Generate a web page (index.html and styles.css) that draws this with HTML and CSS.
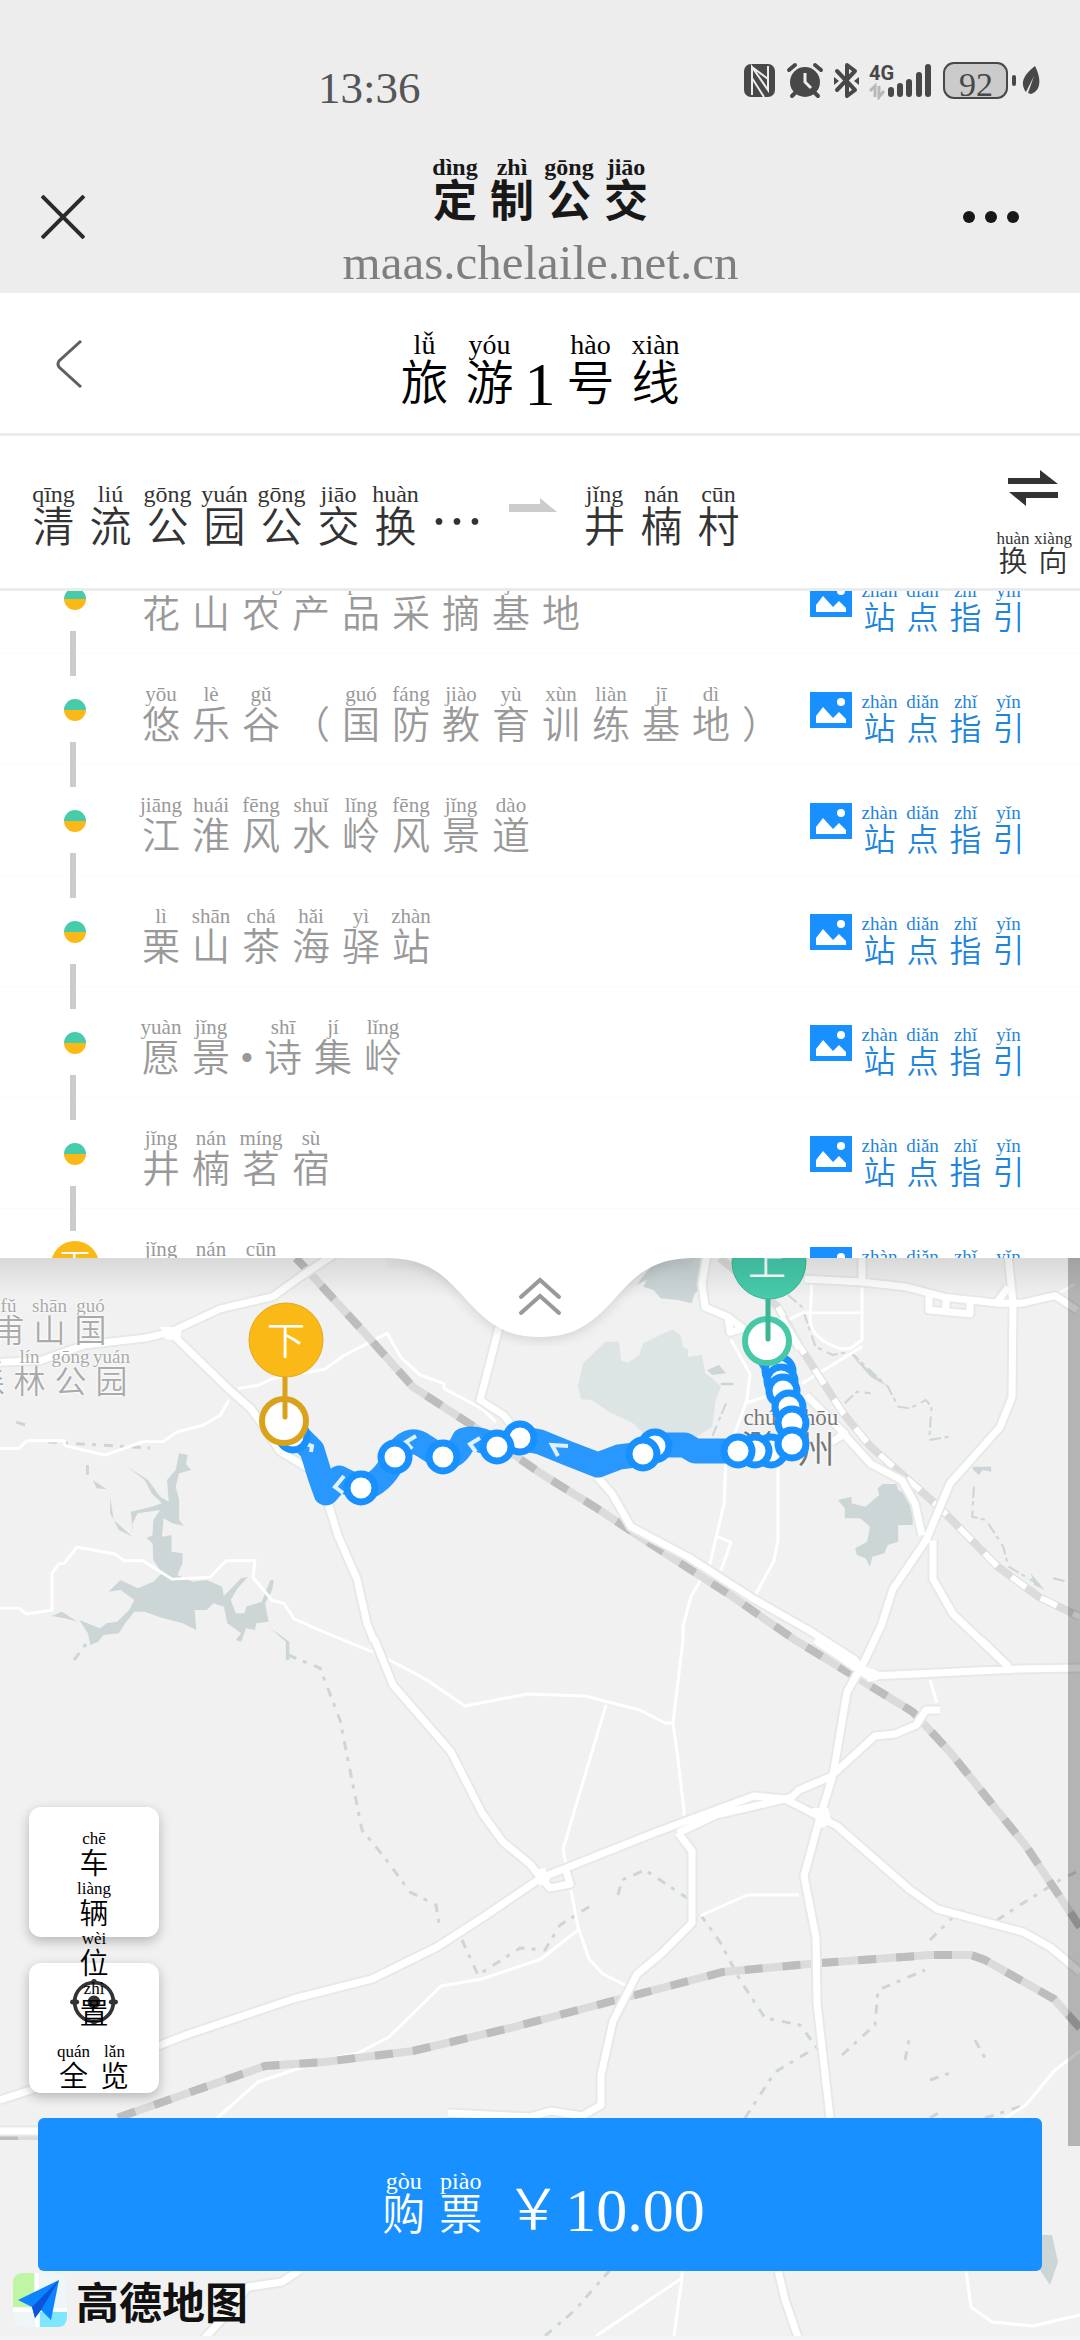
FILE: index.html
```html
<!DOCTYPE html>
<html lang="zh-CN">
<head>
<meta charset="utf-8">
<meta name="viewport" content="width=device-width, initial-scale=1">
<title>定制公交</title>
<link rel="stylesheet" href="styles.css">
</head>
<body>
<header class="top">
  <div class="status">
    <time class="clock">13:36</time>
    <svg class="status-icons" width="300" height="40" viewBox="742 60 300 40" aria-hidden="true">
      <rect x="744" y="64" width="31" height="33" rx="7" fill="#484848"/>
      <path d="M752 95V67L768 90V66M752 67L768 79M752 78L764 97" fill="none" stroke="#ededed" stroke-width="2"/>
      <circle cx="805" cy="82" r="15" fill="#484848"/>
      <path d="M789 70L795 65M821 70L815 65M792 96L796 92M818 96L814 92" stroke="#484848" stroke-width="4" stroke-linecap="round"/>
      <path d="M805 73V82L811 88" fill="none" stroke="#ededed" stroke-width="3"/>
      <path d="M837 71L855 90L847 96V65L855 71L837 90" fill="none" stroke="#484848" stroke-width="4" stroke-linejoin="round" stroke-linecap="round"/>
      <path d="M834 77L839 81L834 85ZM859 77L854 81L859 85Z" fill="#484848"/>
      <text x="869" y="80" class="net">4G</text>
      <path d="M870 91L875 86V97M884 91L879 97V86" fill="none" stroke="#b8b8b8" stroke-width="3"/>
      <path d="M891 90V94M900 86V94M909 82V94M919 75V94M928 67V94" stroke="#484848" stroke-width="6" stroke-linecap="round"/>
      <rect x="944" y="63" width="63" height="35" rx="10" fill="#cbcbcb" stroke="#484848" stroke-width="2"/>
      <path d="M1014 77V84" stroke="#484848" stroke-width="4" stroke-linecap="round"/>
      <text x="976" y="96" class="level" text-anchor="middle">92</text>
      <path d="M1035 66C1041 78 1042 90 1031 94L1028 93L1034 76L1026 92C1019 82 1025 74 1035 66Z" fill="#484848"/>
    </svg>
  </div>
  <div class="titlebar">
    <button class="icon-btn" aria-label="关闭"><svg width="44" height="44" viewBox="0 0 44 44"><path d="M1 1L43 43M43 1L1 43" stroke="#2b2b2b" stroke-width="4"/></svg></button>
    <div class="site">
      <h1 class="site-name rb"><ruby>定<rt>dìng</rt></ruby><ruby>制<rt>zhì</rt></ruby><ruby>公<rt>gōng</rt></ruby><ruby>交<rt>jiāo</rt></ruby></h1>
      <div class="site-url">maas.chelaile.net.cn</div>
    </div>
    <button class="icon-btn" aria-label="更多"><svg width="58" height="14" viewBox="0 0 58 14"><g fill="#181818"><circle cx="7" cy="7" r="6"/><circle cx="29" cy="7" r="6"/><circle cx="51" cy="7" r="6"/></g></svg></button>
  </div>
</header>

<nav class="linebar">
  <button class="back" aria-label="返回"><svg width="28" height="48" viewBox="0 0 28 48"><path d="M25 1L3 21Q1 24 3 27L25 47" fill="none" stroke="#606060" stroke-width="3"/></svg></button>
  <h2 class="line-name rb"><ruby>旅<rt>lǚ</rt></ruby><ruby>游<rt>yóu</rt></ruby><span class="digit">1</span><ruby>号<rt>hào</rt></ruby><ruby>线<rt>xiàn</rt></ruby></h2>
</nav>

<section class="route">
  <div class="place rb"><ruby>清<rt>qīng</rt></ruby><ruby>流<rt>liú</rt></ruby><ruby>公<rt>gōng</rt></ruby><ruby>园<rt>yuán</rt></ruby><ruby>公<rt>gōng</rt></ruby><ruby>交<rt>jiāo</rt></ruby><ruby>换<rt>huàn</rt></ruby><span class="more">…</span></div>
  <svg class="arrow" width="48" height="14" viewBox="0 0 48 14"><path d="M0 6H31V0L48 14H0Z" fill="#ccc"/></svg>
  <div class="place rb"><ruby>井<rt>jǐng</rt></ruby><ruby>楠<rt>nán</rt></ruby><ruby>村<rt>cūn</rt></ruby></div>
  <button class="swap">
    <svg width="50" height="36" viewBox="0 0 50 36"><path d="M0 8H32V0L50 14H0ZM50 22V28H18V36L1 22Z" fill="#333"/></svg>
    <span class="rb"><ruby>换<rt>huàn</rt></ruby><ruby>向<rt>xiàng</rt></ruby></span>
  </button>
</section>

<svg width="0" height="0" class="defs" aria-hidden="true"><symbol id="pic" viewBox="0 0 42 36"><path d="M0 0H42V36H0Z" fill="#1890ff"/><circle cx="31" cy="10" r="4" fill="#fff"/><path d="M6 24L13 15L23 26L29 20L36 27V31H6Z" fill="#fff"/></symbol></svg>

<section class="panel">
  <ol class="stops">
    <li class="stop"><i class="dot"></i><div class="name rb"><ruby>花<rt>huā</rt></ruby><ruby>山<rt>shān</rt></ruby><ruby>农<rt>nóng</rt></ruby><ruby>产<rt>chǎn</rt></ruby><ruby>品<rt>pǐn</rt></ruby><ruby>采<rt>cǎi</rt></ruby><ruby>摘<rt>zhāi</rt></ruby><ruby>基<rt>jī</rt></ruby><ruby>地<rt>dì</rt></ruby></div><a class="guide" href="#"><svg width="42" height="36"><use href="#pic"/></svg><span class="rb"><ruby>站<rt>zhàn</rt></ruby><ruby>点<rt>diǎn</rt></ruby><ruby>指<rt>zhǐ</rt></ruby><ruby>引<rt>yǐn</rt></ruby></span></a></li>
    <li class="stop"><i class="dot"></i><div class="name rb"><ruby>悠<rt>yōu</rt></ruby><ruby>乐<rt>lè</rt></ruby><ruby>谷<rt>gǔ</rt></ruby><ruby>（</ruby><ruby>国<rt>guó</rt></ruby><ruby>防<rt>fáng</rt></ruby><ruby>教<rt>jiào</rt></ruby><ruby>育<rt>yù</rt></ruby><ruby>训<rt>xùn</rt></ruby><ruby>练<rt>liàn</rt></ruby><ruby>基<rt>jī</rt></ruby><ruby>地<rt>dì</rt></ruby><ruby>）</ruby></div><a class="guide" href="#"><svg width="42" height="36"><use href="#pic"/></svg><span class="rb"><ruby>站<rt>zhàn</rt></ruby><ruby>点<rt>diǎn</rt></ruby><ruby>指<rt>zhǐ</rt></ruby><ruby>引<rt>yǐn</rt></ruby></span></a></li>
    <li class="stop"><i class="dot"></i><div class="name rb"><ruby>江<rt>jiāng</rt></ruby><ruby>淮<rt>huái</rt></ruby><ruby>风<rt>fēng</rt></ruby><ruby>水<rt>shuǐ</rt></ruby><ruby>岭<rt>lǐng</rt></ruby><ruby>风<rt>fēng</rt></ruby><ruby>景<rt>jǐng</rt></ruby><ruby>道<rt>dào</rt></ruby></div><a class="guide" href="#"><svg width="42" height="36"><use href="#pic"/></svg><span class="rb"><ruby>站<rt>zhàn</rt></ruby><ruby>点<rt>diǎn</rt></ruby><ruby>指<rt>zhǐ</rt></ruby><ruby>引<rt>yǐn</rt></ruby></span></a></li>
    <li class="stop"><i class="dot"></i><div class="name rb"><ruby>栗<rt>lì</rt></ruby><ruby>山<rt>shān</rt></ruby><ruby>茶<rt>chá</rt></ruby><ruby>海<rt>hǎi</rt></ruby><ruby>驿<rt>yì</rt></ruby><ruby>站<rt>zhàn</rt></ruby></div><a class="guide" href="#"><svg width="42" height="36"><use href="#pic"/></svg><span class="rb"><ruby>站<rt>zhàn</rt></ruby><ruby>点<rt>diǎn</rt></ruby><ruby>指<rt>zhǐ</rt></ruby><ruby>引<rt>yǐn</rt></ruby></span></a></li>
    <li class="stop"><i class="dot"></i><div class="name rb"><ruby>愿<rt>yuàn</rt></ruby><ruby>景<rt>jǐng</rt></ruby><span class="mid">•</span><ruby>诗<rt>shī</rt></ruby><ruby>集<rt>jí</rt></ruby><ruby>岭<rt>lǐng</rt></ruby></div><a class="guide" href="#"><svg width="42" height="36"><use href="#pic"/></svg><span class="rb"><ruby>站<rt>zhàn</rt></ruby><ruby>点<rt>diǎn</rt></ruby><ruby>指<rt>zhǐ</rt></ruby><ruby>引<rt>yǐn</rt></ruby></span></a></li>
    <li class="stop"><i class="dot"></i><div class="name rb"><ruby>井<rt>jǐng</rt></ruby><ruby>楠<rt>nán</rt></ruby><ruby>茗<rt>míng</rt></ruby><ruby>宿<rt>sù</rt></ruby></div><a class="guide" href="#"><svg width="42" height="36"><use href="#pic"/></svg><span class="rb"><ruby>站<rt>zhàn</rt></ruby><ruby>点<rt>diǎn</rt></ruby><ruby>指<rt>zhǐ</rt></ruby><ruby>引<rt>yǐn</rt></ruby></span></a></li>
    <li class="stop"><i class="dot end">下</i><div class="name rb"><ruby>井<rt>jǐng</rt></ruby><ruby>楠<rt>nán</rt></ruby><ruby>村<rt>cūn</rt></ruby></div><a class="guide" href="#"><svg width="42" height="36"><use href="#pic"/></svg><span class="rb"><ruby>站<rt>zhàn</rt></ruby><ruby>点<rt>diǎn</rt></ruby><ruby>指<rt>zhǐ</rt></ruby><ruby>引<rt>yǐn</rt></ruby></span></a></li>
  </ol>
</section>

<main class="map">
  <svg class="canvas" viewBox="0 1258 1080 1078" preserveAspectRatio="xMidYMin slice" aria-hidden="true">
    <!-- lakes -->
    <g fill="#dde5e4" transform="translate(540 1240) scale(.3444 .3333)">
      <path d="M150 345L190 305H230L235 360L255 368L288 345L300 310L360 280L385 268L408 285L415 320L430 330V350L470 345L480 400L500 415L525 440L510 480L500 560L440 600L300 580L270 550L200 515L150 480L120 478L110 440L125 370Z"/>
    </g>
    <g fill="#cdd6d7" transform="translate(540 1240) scale(.3444 .3333)">
      <path d="M345 54H480L470 140L450 160L440 190L400 180L350 175L330 150L300 140L310 120L280 135L310 95Z"/>
      <path d="M485 390L520 375L540 400L500 405ZM525 428H562V436H525Z"/>
      <path d="M980 745L995 732H1035L1040 750L1060 760L1082 820V855H1040V905L1010 915L1000 940L965 950L958 980L945 955L920 945L915 925L950 905L958 860L930 835H885V805L865 780L905 770V790L945 800L985 765Z"/>
      <path d="M1255 680H1310V695L1285 690L1275 705L1258 690ZM900 340L1010 440L960 410ZM1425 1000L1465 1050L1435 1035Z"/>
    </g>
    <g fill="none" stroke="#cdd6d7" stroke-width="6" transform="translate(540 1240) scale(.3444 .3333)" stroke-dasharray="34 10 12 16">
      <path d="M720 165L760 200L800 320L850 345L900 335L1010 440L1040 500L1075 505L1120 480L1137 500L1130 600L1190 590M885 490L920 455L960 460M1260 740L1255 830L1295 840L1345 920L1360 980L1460 1040M540 490L500 590M1490 1015L1530 1025"/>
    </g>
    <g fill="#cdd6d7" transform="translate(0 1240) scale(.3444 .3333)">
      <path d="M520 640L545 645L540 672L555 690L520 700L510 740L520 780V840L535 858L500 850L475 835L470 890L498 885V935L530 940L530 970L515 1005L560 1025L600 1020L645 1040L650 1068L700 1015L720 1010L690 1045L670 1080L685 1120H710L715 1100L760 1085L785 1020L795 1020L790 1050L770 1090L780 1145L745 1150L740 1170L715 1165L700 1205L685 1200L700 1180L660 1150L650 1100L620 1090L600 1110L565 1110L570 1170L530 1150L460 1130L420 1115H390L360 1155L345 1180L300 1185L285 1205L262 1215L255 1180L230 1140L290 1165L310 1150L340 1145L375 1110L390 1080L350 1050L315 1055L350 1020L400 1045L445 1025L470 1000L445 960L443 910L425 895L443 885L445 840L465 810L400 820L385 850V880L380 815L440 800L470 790L440 760L420 720L370 680L430 720L465 770L490 785L485 720L510 690Z"/>
      <path d="M270 720L310 748L280 745ZM250 675H258V705H250ZM320 770L330 840L385 890L345 870L320 820ZM150 1128L180 1115L225 1145L190 1135ZM780 1160L840 1205V1260H830V1205Z"/>
    </g>
    <g fill="none" stroke="#cdd6d7" stroke-width="3" stroke-dasharray="9 7 4 8">
      <path d="M74 1660L92 1636M288 1655L320 1668L340 1720L352 1780L362 1830L385 1858L410 1892L436 1905L440 1930M462 1940L478 1975L520 1948L545 1950L560 1925L592 1905M618 1895L622 1880L645 1870L690 1900L720 1942L740 1980L765 2018L800 2025L820 2052M842 2055L875 2025L878 1990L925 1970M745 2118L775 2072L812 2050M930 1940L960 1910L990 1925L1020 1905L1060 1880L1080 1870M905 2060L910 2035M930 2080L950 2073M975 2040L985 2058M930 2118L940 2112M985 2118L1025 2105M610 2270L575 2310L545 2336M25 1425L10 1420M48 1442L150 1448"/>
    </g>
    <!-- local roads -->
    <g fill="none" stroke="#fff" stroke-width="3" stroke-linejoin="round">
      <path transform="translate(0 40) scale(1 .968)" d="M0 1455H19L27 1447H64L65 1452L105 1462L143 1448H163L177 1438L203 1431L220 1421L229 1405M238 1393L258 1390L272 1383L325 1373L344 1359L387 1336L401 1361L420 1379L444 1388V1393L482 1414L496 1428M0 1620H19L26 1626L52 1622V1584L59 1574H64L77 1557L115 1564L124 1571H143L172 1590L210 1588L226 1571H255L253 1588L272 1612L284 1615L294 1631L327 1646L372 1665M812 1281L810 1323Q812 1342 840 1352H850L862 1343V1285M781 1326L802 1315H860M862 1350L802 1388M731 1343L750 1378L747 1405L726 1464L724 1512L710 1574L691 1608L683 1639V1654M747 1408L770 1400M778 1474V1550L774 1571L755 1607M717 1546L731 1552L721 1581M1075 1285L1055 1297"/>
      <path d="M372 1651L399 1665L427 1680L465 1706L527 1694L585 1696L640 1710L665 1723H673M683 1640L673 1723L678 1759L684 1811V1830"/>
      <path d="M606 1705L563 1849L578 1927L589 1959L603 1974L627 1986M578 1930L541 1959L482 1979L441 1986L389 2037L358 2053L324 2060L258 2082L217 2118M700 1916L747 1895H799M930 1680L937 1703M1080 2051L1054 2071L1026 2105L1005 2118M682 2270V2278L596 2336M682 2278L674 2336M966 2270L971 2307L992 2322L1033 2326L1080 2315"/>
    </g>
    <!-- railways -->
    <g fill="none" stroke-width="8">
      <path stroke="#dbdbdb" d="M296 1258L362 1330L413 1387L479 1430L540 1473L595 1507L640 1537L733 1597L795 1640L851 1674L913 1712L950 1752L1026 1846L1080 1927M1080 2028L1054 1999L985 1960L971 1955H930L820 1963L723 1972L620 1999L510 2028L413 2051L324 2062L265 2066L117 2118M720 1258L778 1307L802 1350L843 1413L871 1447L939 1507L998 1567L1039 1597L1080 1617M0 2136H38"/>
      <path stroke="#bdbdbd" stroke-dasharray="18 20" d="M296 1258L362 1330L413 1387L479 1430L540 1473L595 1507L640 1537L733 1597L795 1640L851 1674L913 1712L950 1752L1026 1846L1080 1927M1080 2028L1054 1999L985 1960L971 1955H930L820 1963L723 1972L620 1999L510 2028L413 2051L324 2062L265 2066L117 2118M0 2136H38"/>
      <path stroke="#fff" stroke-width="6" stroke-dasharray="18 18" d="M778 1307L802 1350L843 1413L871 1447L939 1507L998 1567L1039 1597L1080 1617"/>
    </g>
    <!-- main roads: pale casing, white core -->
    <defs>
      <path id="roads-n" fill="none" stroke-linejoin="round" transform="translate(0 40) scale(1 .968)" d="M0 1366L41 1364L85 1348L145 1341L170 1335L220 1311L273 1298L300 1278L335 1254M172 1337L228 1393L251 1414L262 1430L280 1458L315 1480L329 1515L338 1545L357 1590L367 1636L374 1654M1008 1254L1013 1305L1012 1402L1000 1433L969 1469L950 1491L926 1550L893 1600L881 1639M597 1484L612 1502L631 1536L688 1567L753 1610L809 1643L853 1672M933 1550V1590L953 1626L1009 1681M840 1436L871 1471L902 1488L915 1512L922 1545M707 1254L702 1285L705 1309L728 1319L743 1331L730 1335L728 1319M805 1280L860 1283L905 1288L946 1299L998 1305L1022 1305L1055 1297L1077 1312M929 1297V1312L970 1316V1303M946 1299V1314M998 1303L1008 1288M862 1254V1283M499 1330L480 1405L504 1421L513 1433M781 1320L800 1352M806 1400L845 1440L832 1448"/>
      <path id="roads-s" fill="none" stroke-linejoin="round" d="M374 1638L393 1685L451 1752L482 1813L503 1842L530 1864L541 1878L482 1918L437 1947L372 1979L293 1999L186 2035L158 2046L28 2091L0 2100M541 1878L550 1888L570 1884L565 1867M541 1878L654 1833L754 1796L785 1799L820 1817L837 1826L909 1889L937 1909L1023 1932L1050 1947L1080 1972M881 1626L865 1660L847 1692L833 1775L820 1817L804 1876L816 1938L817 2003L830 2118M853 1658L868 1676L916 1674L1019 1669L1080 1668M1009 1667L981 1640M815 1640L868 1676M678 1833L692 1851V1923L661 1954L637 1974L613 2021L601 2075V2105L582 2116L551 2111L530 2117L448 2113M678 1833L716 1815L764 1804L792 1797L799 1790L830 1777L875 1736L895 1734L916 1725L926 1710H940M778 2270L785 2300L799 2340M300 2270L282 2282L248 2287L224 2317L203 2340M0 2131H38"/>
    </defs>
    <g stroke="#e5eae5" stroke-width="11"><use href="#roads-n"/><use href="#roads-s"/></g>
    <g stroke="#fff" stroke-width="7"><use href="#roads-n"/><use href="#roads-s"/></g>
    <path d="M533 1870L545 1868L550 1880L540 1886ZM812 1808H828L832 1824L820 1828ZM160 1327L182 1327L180 1341L165 1339ZM864 1666L880 1672L878 1680L868 1682Z" fill="#fff"/>
    <path d="M1040 2235H1052L1058 2262L1050 2285L1040 2270Z" fill="#cdd6d7"/>
  </svg>
  <div class="label park"><div><ruby>甫<rt>fǔ</rt></ruby><ruby>山<rt>shān</rt></ruby><ruby>国<rt>guó</rt></ruby></div><div class="second"><ruby>森<rt>sēn</rt></ruby><ruby>林<rt>lín</rt></ruby><ruby>公<rt>gōng</rt></ruby><ruby>园<rt>yuán</rt></ruby></div></div>
  <div class="label city rb"><ruby>滁<rt>chú</rt></ruby><ruby>州<rt>zhōu</rt></ruby></div>
  <svg class="canvas" viewBox="0 1258 1080 1078" preserveAspectRatio="xMidYMin slice" aria-hidden="true">
    <path d="M294 1432L312 1450L320 1476L326 1493L339 1478L361 1489Q383 1484 395 1457Q408 1434 424 1446L443 1458Q458 1456 464 1440Q476 1436 497 1447L520 1438L540 1442L567 1453L598 1465L619 1457L643 1454L655 1445L685 1445L695 1451H771L792 1444L789 1406L780 1375L764 1350" fill="none" stroke="#1890ff" stroke-opacity=".92" stroke-width="25" stroke-linejoin="round" stroke-linecap="round"/>
    <path d="M301 1442L312 1446L311 1452M344 1476L335 1487L343 1493M416 1436L406 1442L412 1449M480 1438L470 1444L476 1452M568 1446L552 1445L558 1456" fill="none" stroke="#dff0ff" stroke-width="4"/>
    <g fill="#fff" stroke="#1890ff" stroke-width="7">
      <circle cx="293" cy="1436" r="14"/><circle cx="361" cy="1488" r="14"/><circle cx="395" cy="1457" r="14"/><circle cx="443" cy="1457" r="14"/><circle cx="520" cy="1438" r="14"/><circle cx="497" cy="1447" r="14"/><circle cx="655" cy="1446" r="14"/><circle cx="643" cy="1454" r="14"/>
      <circle cx="779" cy="1371" r="14"/><circle cx="781" cy="1381" r="14"/><circle cx="783" cy="1391" r="14"/><circle cx="789" cy="1407" r="14"/><circle cx="792" cy="1423" r="14"/><circle cx="771" cy="1451" r="14"/><circle cx="792" cy="1444" r="14"/><circle cx="755" cy="1451" r="14"/><circle cx="738" cy="1451" r="14"/>
    </g>
    <circle cx="284" cy="1421" r="22" fill="#fff" stroke="#daa21a" stroke-width="6"/>
    <path d="M285 1376V1417" stroke="#daa21a" stroke-width="5" stroke-linecap="round"/>
    <circle cx="286" cy="1340" r="37" fill="#fbb917" stroke="#e3a81c"/>
    <text x="286" y="1354" class="pin">下</text>
    <circle cx="767" cy="1341" r="22" fill="#fff" stroke="#47c8a6" stroke-width="6"/>
    <path d="M768 1298V1339" stroke="#3cb594" stroke-width="5" stroke-linecap="round"/>
    <circle cx="769" cy="1262" r="37" fill="#46cbab" stroke="#3fb898"/>
    <text x="767" y="1275" class="pin">上</text>
  </svg>
  <button class="fold" aria-label="收起"><svg width="308" height="92" viewBox="386 1254 308 92"><path class="notch" d="M386 1254V1258C430 1258 446 1278 463 1296C486 1322 504 1337 540 1337C576 1337 594 1322 617 1296C634 1278 650 1258 694 1258V1254Z" fill="#fff"/><path d="M521 1297L540 1280L559 1297M521 1313L540 1296L559 1313" fill="none" stroke="#999" stroke-width="4" stroke-linecap="round"/></svg></button>
  <div class="scroll"></div>
  <div class="tools">
    <button class="tool tall"><ruby>车<rt>chē</rt></ruby><ruby>辆<rt>liàng</rt></ruby><ruby>位<rt>wèi</rt></ruby><ruby>置<rt>zhì</rt></ruby></button>
    <button class="tool"><svg width="52" height="52" viewBox="0 0 52 52"><circle cx="26" cy="26" r="21" fill="none" stroke="#333" stroke-width="4"/><circle cx="26" cy="26" r="7" fill="#333"/><g fill="#333"><circle cx="26" cy="4" r="3"/><circle cx="26" cy="48" r="3"/><ellipse cx="5" cy="26" rx="5" ry="3"/><ellipse cx="47" cy="26" rx="5" ry="3"/></g></svg><span class="rb"><ruby>全<rt>quán</rt></ruby><ruby>览<rt>lǎn</rt></ruby></span></button>
  </div>
  <div class="bottom">
    <button class="buy rb"><ruby>购<rt>gòu</rt></ruby><ruby>票<rt>piào</rt></ruby><span class="price"><span class="yen">￥</span>10.00</span></button>
    <div class="brand"><svg width="54" height="54" viewBox="0 0 54 54"><rect width="54" height="54" rx="10" fill="#eef6f8"/><path d="M0 34V10Q0 0 10 0H21V34Z" fill="#c0f5a4"/><path d="M27 54V39H54V44Q54 54 44 54Z" fill="#7fe6ff"/><path d="M24 0V54M0 37H54" stroke="#fff" stroke-width="4"/><path d="M5 27L46 7L38 47L28 37L22 45L19 34Z" fill="#0a84ff"/><path d="M46 7L19 34L22 45L28 37Z" fill="#0b55d9"/></svg><span>高德地图</span></div>
  </div>
</main>
</body>
</html>
```
FILE: styles.css
```css
* { box-sizing: border-box; }
body {
  margin: 0;
  min-height: 100vh;
  display: flex;
  flex-direction: column;
  background: #f3f4f6;
  color: #333;
  font-family: "Liberation Serif", "Noto Sans CJK SC", serif;
  font-weight: 350;
}
button {
  border: 0;
  padding: 0;
  background: none;
  color: inherit;
  font: inherit;
}
svg { display: block; }
h1, h2, ol { margin: 0; padding: 0; font-weight: 350; }
.defs { position: absolute; }

/* characters with their reading above */
.rb { --cell: 50px; display: flex; align-items: flex-end; }
ruby {
  display: flex;
  flex-direction: column-reverse;
  align-items: center;
  flex: none;
  width: var(--cell);
}
rt { display: block; white-space: nowrap; }

.top { background: #ededed; }
.status {
  height: 130px;
  display: flex;
  justify-content: space-between;
  padding: 60px 38px 0 318px;
}
.clock { font-size: 45px; line-height: 56px; color: #555; }
.net { font: bold 20px Roboto, sans-serif; fill: #484848; }
.level { font: 34px "Liberation Serif", serif; fill: #484848; }
.titlebar {
  display: grid;
  grid-template-columns: 1fr auto 1fr;
  height: 163px;
  padding: 25px 60px 0 41px;
}
.icon-btn { height: 124px; justify-self: start; }
.icon-btn:last-child { justify-self: end; }
.site { display: flex; flex-direction: column; align-items: center; margin-left: 20px; }
.site-name {
  --cell: 57px;
  font-size: 44px;
  line-height: 48px;
  font-weight: 700;
  color: #181818;
}
.site-name rt { font-size: 24px; line-height: 24px; }
.site-url { font-size: 49px; line-height: 56px; color: #7f7f7f; margin-top: 8px; }

.linebar {
  display: grid;
  grid-template-columns: 1fr auto 1fr;
  align-items: start;
  height: 143px;
  padding: 38px 56px 0;
  background: #fff;
  border-bottom: 3px solid #ebebeb;
}
.back { justify-self: start; padding-top: 9px; }
.line-name { --cell: 65px; font-size: 48px; line-height: 50px; color: #000; }
.line-name rt { font-size: 28px; line-height: 28px; }
.digit { width: 36px; text-align: center; font-size: 62px; }

.route {
  display: flex;
  align-items: flex-start;
  gap: 19px;
  height: 155px;
  padding: 46px 7px 0 25px;
  background: #fff;
  border-bottom: 3px solid #ebebeb;
}
.place { --cell: 57px; font-size: 42px; line-height: 44px; }
.place rt { font-size: 24px; line-height: 24px; }
.more { width: 66px; text-align: center; font-family: "Noto Sans CJK SC", sans-serif; font-size: 54px; line-height: 62px; }
.arrow { margin-top: 16px; }
.swap {
  margin: -12px 0 0 auto;
  display: flex;
  flex-direction: column;
  align-items: center;
  gap: 25px;
}
.swap .rb { --cell: 40px; font-size: 29px; line-height: 30px; }
.swap rt { font-size: 17px; line-height: 16px; }

.panel {
  position: relative;
  z-index: 1;
  height: 667px;
  overflow: hidden;
  background: #fff;
}
.stops { list-style: none; margin-top: -48px; }
.stop {
  position: relative;
  display: flex;
  align-items: flex-start;
  height: 111px;
  padding: 0 50px;
  border-bottom: 1px solid #fbfbfb;
}
.stop::after {
  content: "";
  position: absolute;
  left: 70px;
  top: 88px;
  z-index: 1;
  width: 6px;
  height: 45px;
  background: #ccc;
}
.dot {
  width: 22px;
  height: 22px;
  margin: 45px 14px 0;
  border-radius: 50%;
  background: linear-gradient(#46cbab 50%, #fbb917 50%);
}
.dot.end {
  width: 48px;
  height: 48px;
  margin: 32px 1px 0;
  background: #fbb917;
  color: #fff;
  font-size: 30px;
  line-height: 48px;
  font-style: normal;
  text-align: center;
}
.name {
  padding: 29px 0 0 36px;
  flex: 1;
  font-size: 38px;
  line-height: 40px;
  color: #999;
}
.name rt { font-size: 21px; line-height: 22px; }
.mid { width: 22px; text-align: center; }
.guide {
  display: flex;
  align-items: flex-start;
  gap: 6px;
  padding-top: 38px;
  color: #1f84dc;
  text-decoration: none;
}
.guide .rb { --cell: 43px; font-size: 32px; line-height: 34px; }
.guide rt { font-size: 19px; line-height: 20px; }

.map {
  position: relative;
  flex: 1;
  display: flex;
  flex-direction: column;
  justify-content: flex-end;
  margin-bottom: 4px;
  background: #f1f1f1;
  overflow: hidden;
}
.map::before {
  content: "";
  position: absolute;
  inset: 0 0 auto;
  z-index: 1;
  height: 40px;
  background: linear-gradient(rgba(0, 0, 0, .1), rgba(0, 0, 0, 0));
}
.canvas { position: absolute; inset: 0; width: 100%; height: 100%; }
.pin { font: 350 38px "Noto Sans CJK SC", sans-serif; fill: #fff; text-anchor: middle; }
.label { position: absolute; text-shadow: 0 0 3px #fff, 0 0 3px #fff; }
.park {
  --cell: 41px;
  left: -12px;
  top: 39px;
  font-size: 32px;
  line-height: 34px;
  color: #aaa;
}
.park div { display: flex; }
.park rt { font-size: 19px; line-height: 17px; }
.park .second { margin-left: -20px; }
.city { --cell: 56px; left: 732px; top: 148px; font-size: 38px; line-height: 40px; color: #777; }
.city rt { font-size: 23px; line-height: 24px; }
.fold { position: absolute; z-index: 2; top: -4px; left: 50%; margin-left: -154px; }
.notch { filter: drop-shadow(0 3px 6px rgba(0, 0, 0, .12)); }
.scroll { position: absolute; top: 0; right: 0; width: 12px; height: 888px; background: rgba(0, 0, 0, .25); }

.tools { position: relative; display: flex; flex-direction: column; gap: 26px; padding: 0 0 25px 29px; }
.tool {
  width: 130px;
  height: 130px;
  display: flex;
  flex-direction: column;
  align-items: center;
  padding-top: 15px;
  border-radius: 12px;
  background: #fff;
  box-shadow: 0 4px 12px rgba(0, 0, 0, .25);
  color: #000;
  font-size: 29px;
  line-height: 32px;
}
.tool rt { font-size: 17px; line-height: 18px; }
.tool.tall { position: relative; z-index: 1; padding-top: 23px; }
.tool .rb { --cell: 41px; margin-top: 17px; }

.bottom { position: relative; padding: 0 38px 9px; }
.buy {
  width: 100%;
  height: 153px;
  display: flex;
  justify-content: center;
  --cell: 57px;
  padding-bottom: 32px;
  border-radius: 6px;
  background: #1890ff;
  color: #fff;
  font-size: 43px;
  line-height: 46px;
}
.buy rt { font-size: 24px; line-height: 24px; }
.price { display: flex; gap: 4px; margin-left: 16px; padding-bottom: 6px; font-size: 62px; }
.yen { font-size: 56px; }
.brand {
  display: flex;
  align-items: center;
  gap: 9px;
  margin: 2px 0 0 -25px;
  font: 700 43px/54px "Noto Sans CJK SC", sans-serif;
  color: #111;
}
```
